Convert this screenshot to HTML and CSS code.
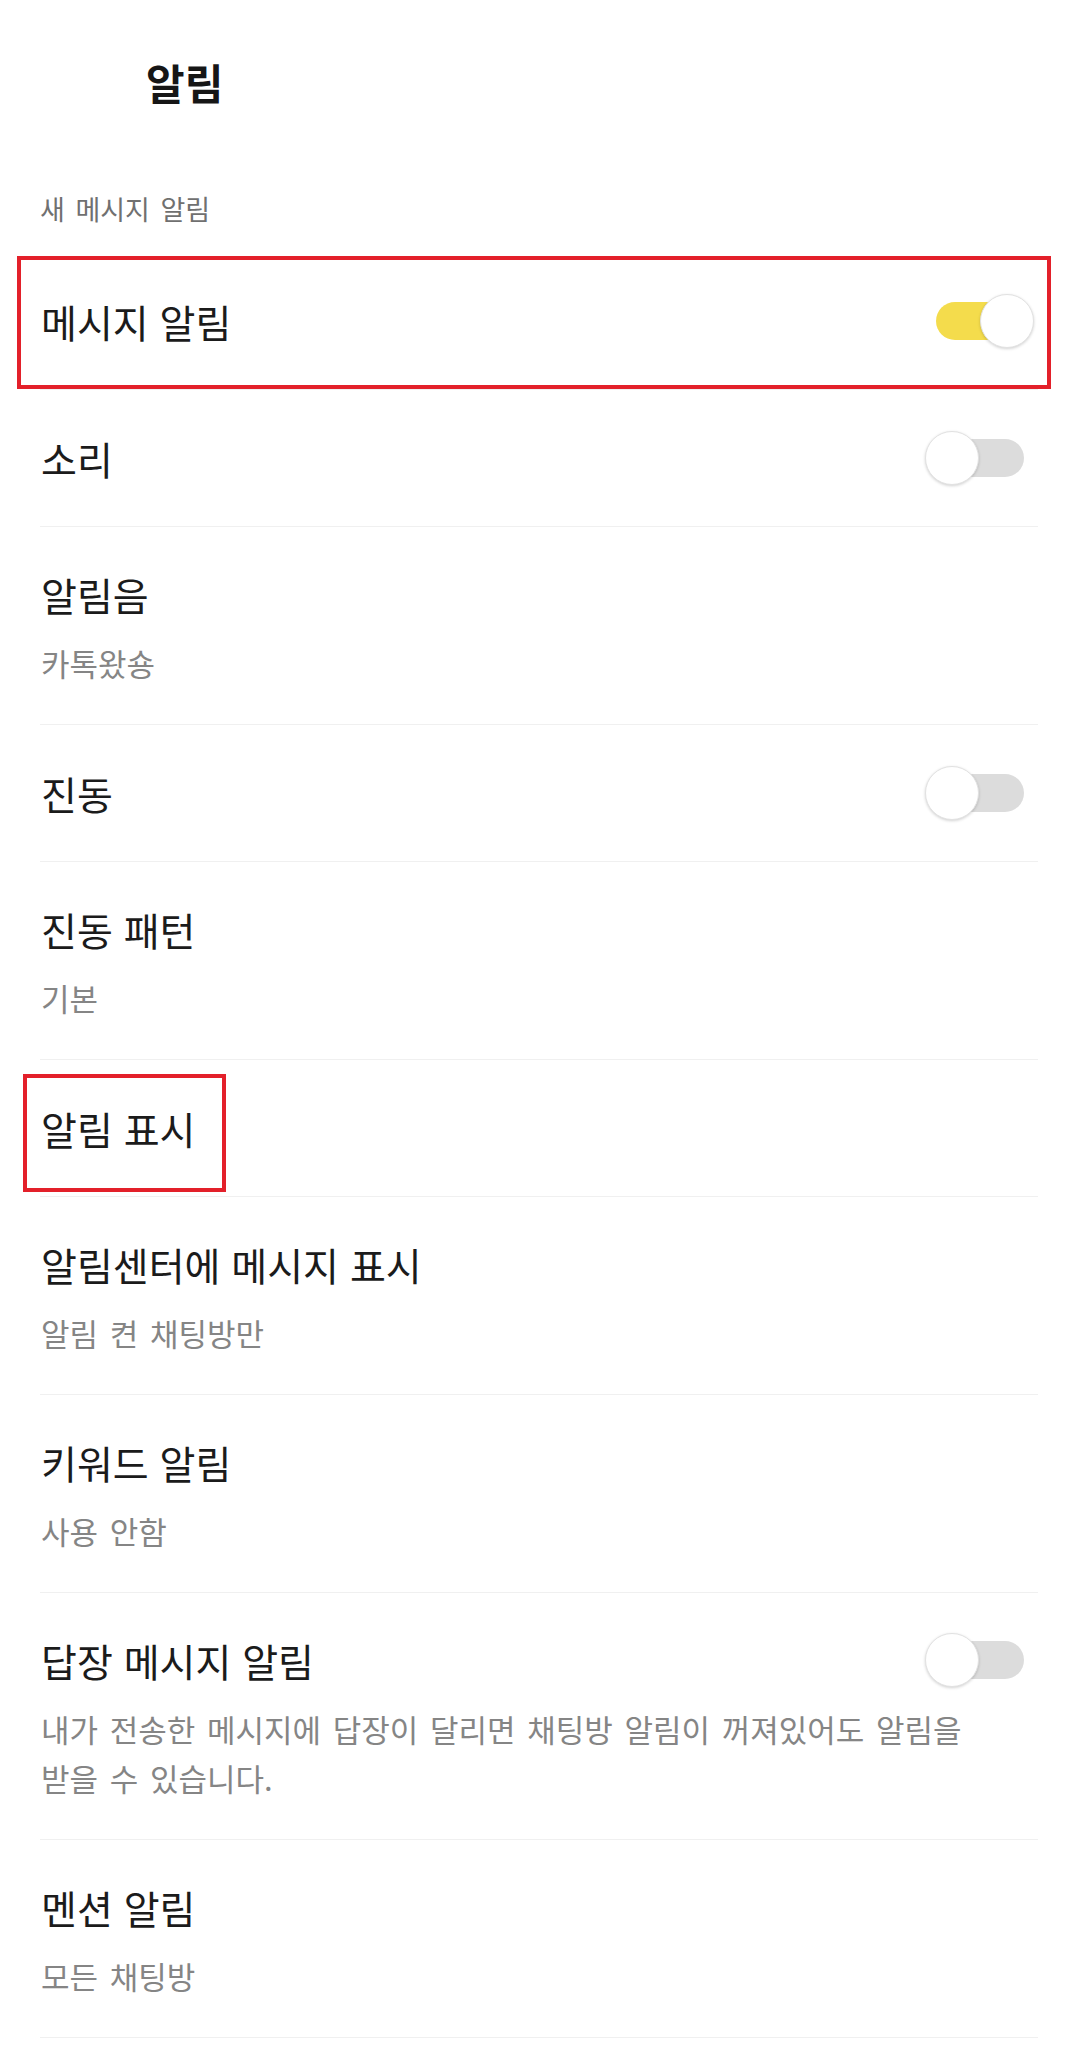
FILE: index.html
```html
<!DOCTYPE html>
<html lang="ko">
<head>
<meta charset="utf-8">
<title>알림</title>
<link rel="stylesheet" href="styles.css">
</head>
<body>
<div class="page">
  <header class="appbar"><h1 class="appbar-title">알림</h1></header>
  <div class="section-label">새 메시지 알림</div>
  <ul class="list">
    <li class="row">
      <div class="row-head"><span class="row-title">메시지 알림</span><span class="switch on"><span class="knob"></span></span></div>
      <span class="mark mark-1"></span>
    </li>
    <li class="row">
      <div class="row-head"><span class="row-title">소리</span><span class="switch"><span class="knob"></span></span></div>
    </li>
    <li class="row">
      <div class="row-head"><span class="row-title">알림음</span></div>
      <div class="row-sub">카톡왔숑</div>
    </li>
    <li class="row">
      <div class="row-head"><span class="row-title">진동</span><span class="switch"><span class="knob"></span></span></div>
    </li>
    <li class="row">
      <div class="row-head"><span class="row-title">진동 패턴</span></div>
      <div class="row-sub">기본</div>
    </li>
    <li class="row">
      <div class="row-head"><span class="row-title">알림 표시</span></div>
      <span class="mark mark-2"></span>
    </li>
    <li class="row">
      <div class="row-head"><span class="row-title">알림센터에 메시지 표시</span></div>
      <div class="row-sub">알림 켠 채팅방만</div>
    </li>
    <li class="row">
      <div class="row-head"><span class="row-title">키워드 알림</span></div>
      <div class="row-sub">사용 안함</div>
    </li>
    <li class="row">
      <div class="row-head"><span class="row-title">답장 메시지 알림</span><span class="switch"><span class="knob"></span></span></div>
      <div class="row-sub row-desc">내가 전송한 메시지에 답장이 달리면 채팅방 알림이 꺼져있어도 알림을 받을 수 있습니다.</div>
    </li>
    <li class="row">
      <div class="row-head"><span class="row-title">멘션 알림</span></div>
      <div class="row-sub">모든 채팅방</div>
    </li>
  </ul>
</div>
</body>
</html>
```
FILE: styles.css
```css
* { box-sizing: border-box; }
html, body { margin: 0; padding: 0; background: #ffffff; }
body {
  font-family: "Noto Sans CJK KR", "Noto Sans", sans-serif;
  color: #1b1b1b;
  word-break: keep-all;
}
.page { width: 1078px; }

.appbar {
  height: 164px;
  display: flex;
  align-items: center;
  padding-left: 146px;
}
.appbar-title {
  margin: 0;
  font-size: 42px;
  font-weight: 700;
  line-height: 50px;
  color: #161616;
}

.section-label {
  padding: 25px 40px 24px;
  font-size: 27px;
  line-height: 40px;
  color: #707070;
  word-spacing: 3px;
}

.list { list-style: none; margin: 0; padding: 0 40px; }

.row {
  position: relative;
  padding: 43px 0;
  border-bottom: 1px solid #f0f0f0;
}
.row:has(.row-sub) { padding: 42px 0 37px; }

.row-head {
  height: 50px;
  display: flex;
  align-items: center;
  justify-content: space-between;
}
.row-title {
  font-size: 39px;
  line-height: 50px;
  color: #1b1b1b;
  padding-left: 1px;
}
.row-sub {
  margin-top: 19px;
  font-size: 31px;
  line-height: 49px;
  color: #858585;
  word-spacing: 3px;
  padding-left: 1px;
}
.row-desc { max-width: 950px; }

.switch {
  position: relative;
  width: 88px;
  height: 38px;
  margin-right: 14px;
  border-radius: 19px;
  background: #dcdcdc;
  flex: none;
}
.switch.on { background: #f4dc4c; }
.knob {
  position: absolute;
  top: -8px;
  left: -11px;
  width: 54px;
  height: 54px;
  border-radius: 50%;
  background: #ffffff;
  border: 1px solid #e2e2e2;
  box-shadow: 0 1px 3px rgba(0,0,0,0.18);
}
.switch.on .knob { left: 44px; }

.mark {
  position: absolute;
  border: 4px solid #e3202a;
  pointer-events: none;
}
.mark-1 { left: -23px; top: 3px; width: 1034px; height: 133px; }
.mark-2 { left: -17px; top: 14px; width: 203px; height: 118px; }
```
